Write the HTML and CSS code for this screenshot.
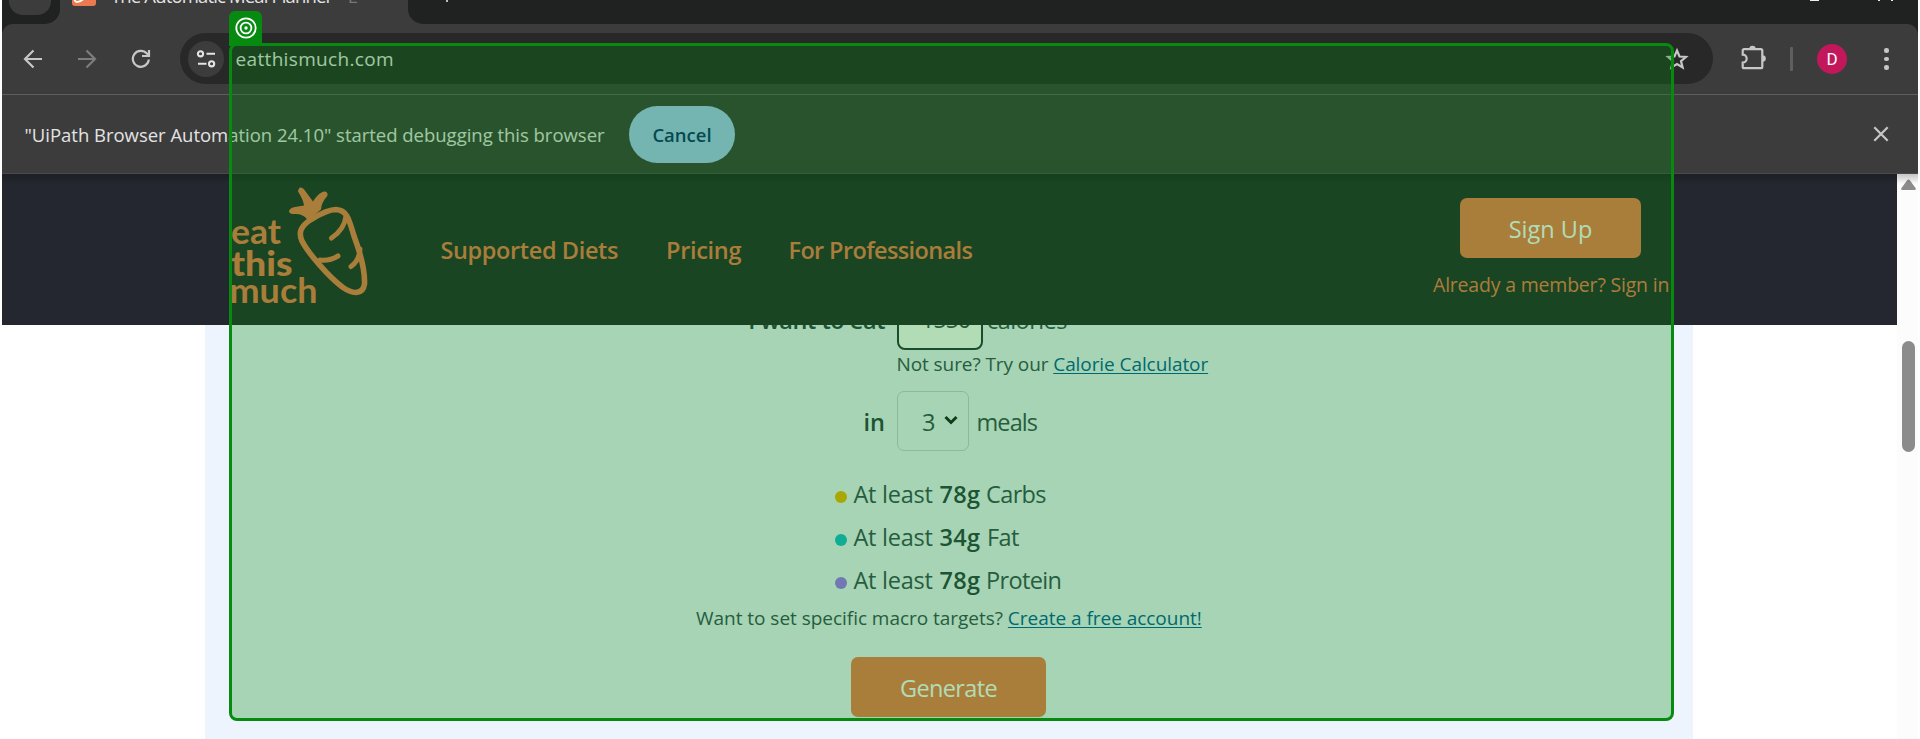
FILE: index.html
```html
<!DOCTYPE html>
<html lang="en">
<head>
<meta charset="utf-8">
<title>The Automatic Meal Planner</title>
<link rel="stylesheet" href="styles.css">
</head>
<body>
<div class="window">
  <div class="tabstrip">
    <div class="strip-left"><span class="tab-search"></span></div>
    <div class="tab">
      <svg class="favicon" width="24" height="24" viewBox="0 0 24 24"><rect width="24" height="24" rx="3" fill="#ec7a50"/><path d="M3 14c-1 4 0 6 2 6 3 0 6-2 9-6" fill="none" stroke="#fff" stroke-width="2"/></svg>
      <span class="tab-title">The Automatic Meal Planner</span><span class="tab-rest">- E</span>
    </div>
    <div class="strip-right"><span class="plus"></span><span class="win-min"></span><span class="win-x"></span><span class="win-x"></span></div>
  </div>

  <div class="toolbar">
    <svg class="ic back" width="20" height="20" viewBox="0 0 20 20"><path d="M19 10H2.500M10.500 1.500 2 10l8.500 8.500"/></svg>
    <svg class="ic forward" width="20" height="20" viewBox="0 0 20 20"><path d="M1 10h16.500M9.500 1.500 18 10l-8.500 8.500"/></svg>
    <svg class="ic reload" width="20" height="20" viewBox="0 0 20 20"><path d="M17.800 10.500A8 8 0 1 1 15.900 4.600L18 6.600M18 1v6h-7"/></svg>
    <div class="omnibox">
      <span class="site-chip"><svg width="20" height="20" viewBox="0 0 20 20"><g fill="none" stroke="#e3e3e3" stroke-width="2.100"><circle cx="4.500" cy="4.800" r="2.600"/><path d="M10.500 4.800H19M2 14.800h8.500"/><circle cx="15.600" cy="14.800" r="2.600"/></g></svg></span>
      <span class="url">eatthismuch.com</span>
      <svg class="star" width="24" height="24" viewBox="0 0 24 24"><path d="M12 3.500l2.500 6 6.400.5-4.900 4.100 1.600 6.300L12 17l-5.600 3.400L8 14.100 3.100 10l6.400-.5z"/></svg>
    </div>
    <svg class="ext" width="26" height="26" viewBox="0 0 26 26"><path d="M3.200 5.200h16.600q1.500 0 1.500 1.500v16q0 1.500-1.500 1.500H3.200q-1.500 0-1.500-1.500V18.600a3.800 3.800 0 0 0 0-8V6.700q0-1.500 1.500-1.500z" fill="none" stroke="#c7c7c7" stroke-width="2.200"/><path d="M8.300 5a3.200 3.200 0 0 1 6.400 0zM21.500 11.300a3.300 3.300 0 0 1 0 6.600z" fill="#c7c7c7"/></svg>
    <span class="divider"></span>
    <span class="avatar">D</span>
    <span class="dots"><i></i><i></i><i></i></span>
  </div>

  <div class="infobar">
    <span class="info-text">"UiPath Browser Automation 24.10" started debugging this browser</span>
    <span class="cancel">Cancel</span>
    <svg class="close" width="16" height="16" viewBox="0 0 16 16"><path d="M1.300 1.300l13.400 13.400M14.700 1.300 1.300 14.700"/></svg>
  </div>

  <div class="viewport">
    <div class="page">
      <header class="site-header">
        <svg class="logo" width="140" height="122" viewBox="0 0 140 122">
          <g fill="#f3784f">
            <g font-family="Lato, sans-serif" font-size="34">
              <text x="0" y="61.200" font-weight="700" textLength="50" lengthAdjust="spacingAndGlyphs">eat</text>
              <text x="0" y="92.500" font-weight="900" textLength="61.500" lengthAdjust="spacingAndGlyphs">this</text>
              <text x="-1.500" y="119.800" font-weight="700" textLength="88" lengthAdjust="spacingAndGlyphs">much</text>
            </g>
            <path d="M69 4.500c3-.5 5 3 7.500 6.500l5.500 7.500c3-5 7-9 11-10 3-.3 4.500 2.500 3 5-3 3-5.500 7-6 13l-13.500 11c-1-3.500-6-6.500-11-6.500-3 0-6 .5-7.500-2 0-3 3-4.500 6-5 3-.6 6-.8 9-1.500-.5-5-3-9-6-14 0-2 1-3 2-4z"/>
            <g fill="none" stroke="#f3784f" stroke-linecap="round" stroke-linejoin="round">
              <path stroke-width="5.600" d="M80 36.500C70 43 67 49 71 58 77 70 98 94 112 104.500 123 112 132 111 133.500 101 134 88 129 69 123 53 118 36 116 27 105 26.500 97 26.500 89 31 80 36.500z"/>
              <path stroke-width="5" d="M115 33c-1 9-7 17-14.500 22M89 77c7 1 13-1 18-4M129 66c-.5 8-4 14-9 17.500"/>
            </g>
          </g>
        </svg>
        <nav class="nav"><a class="n1">Supported Diets</a><a class="n2">Pricing</a><a class="n3">For Professionals</a></nav>
        <div class="account"><a class="btn signup">Sign Up</a><a class="signin">Already a member? Sign in</a></div>
      </header>
      <main class="panel">
        <div class="row eat-row"><b class="label eat-label">I want to eat</b><span class="calories-input">1550</span><span class="unit cal">calories</span></div>
        <div class="hint">Not sure? Try our <a class="link">Calorie Calculator</a></div>
        <div class="row meal-row"><b class="label">in</b><span class="meal-select">3<svg width="14" height="10" viewBox="0 0 14 10"><path d="M1.500 2 7 7.500 12.500 2"/></svg></span><span class="unit meals">meals</span></div>
        <ul class="macros">
          <li><i class="dot carbs"></i><span>At least</span><b>78g</b><span>Carbs</span></li>
          <li><i class="dot fat"></i><span>At least</span><b class="g34">34g</b><span>Fat</span></li>
          <li><i class="dot protein"></i><span>At least</span><b>78g</b><span>Protein</span></li>
        </ul>
        <div class="targets">Want to set specific macro targets? <a class="link">Create a free account!</a></div>
        <a class="btn generate">Generate</a>
      </main>
    </div>
    <div class="scrollbar"><svg width="15" height="12" viewBox="0 0 15 12"><path d="M6 1.500q1.500-2 3 0l5.500 7.500q1 2-1 2h-12q-2 0-1-2z" fill="#8b8b8b"/></svg><span class="thumb"></span></div>
    <div class="top-shadow"></div>
  </div>
</div>

<div class="highlight"><span class="badge"><svg width="22" height="22" viewBox="0 0 22 22"><g fill="none" stroke="#fff" stroke-width="1.800"><circle cx="11" cy="11" r="9.700"/><circle cx="11" cy="11" r="5.400"/></g><circle cx="11" cy="11" r="1.700" fill="#fff"/></svg></span></div>
</body>
</html>
```

FILE: styles.css
```css
*{box-sizing:border-box}
body{margin:0;width:1920px;height:739px;overflow:hidden;position:relative;background:#fff;font-family:"Open Sans","Noto Sans",sans-serif}
a{text-decoration:none;color:inherit}
svg{display:block;flex:none}
.window{width:1916px;height:739px;margin-left:2px;background:#202222;display:flex;flex-direction:column;overflow:hidden}

.tabstrip{height:24px;display:flex;background:#3c3c3c;flex:none}
.strip-left{width:58px;background:#202222;border-bottom-right-radius:15px;padding-left:7px}
.tab-search{display:block;width:42px;height:15px;background:#3c3c3c;border-radius:0 0 14px 14px}
.tab{width:348px;display:flex;height:24px;padding-left:12px;color:#e3e3e3;font-size:18.5px;line-height:26px}
.favicon{margin-top:-18px}
.tab-title{margin:-17px 0 0 15px;letter-spacing:-.85px;white-space:nowrap;width:223px}
.tab-rest{margin-top:-17px;margin-left:3px;color:#777;white-space:nowrap}
.strip-right{flex:1;background:#202222;border-bottom-left-radius:15px;display:flex;padding-left:38px}
.plus{width:2px;height:1.500px;background:#bbb}
.win-min{width:9px;height:1px;background:#eee;margin-left:1362px}
.win-x{width:2px;height:1px;background:#eee;margin-left:59px}
.win-x + .win-x{margin-left:11px}

.toolbar{height:71px;flex:none;background:#3c3c3c;border-radius:11px 11px 0 0;border-bottom:1px solid #5f5f5f;display:flex;align-items:center;padding-left:21px}
.ic{fill:none;stroke:#c7c7c7;stroke-width:2.200}
.forward{margin-left:34px;stroke:#7d7d7d}
.reload{margin-left:34px}
.omnibox{width:1533px;height:51px;margin-left:29px;margin-top:-1px;border-radius:26px;background:#282828;display:flex;align-items:center;padding-left:8px}
.site-chip{width:36px;height:36px;border-radius:50%;background:#3c3c3c;display:flex;align-items:center;justify-content:center}
.url{margin-left:11.500px;font-size:19px;letter-spacing:.34px;color:#e3e3e3;line-height:26px}
.star{margin-left:auto;margin-right:24px;fill:none;stroke:#c7c7c7;stroke-width:2.200}
.ext{margin-left:28px;margin-top:-4px}
.divider{width:3px;height:24px;background:#5f5f5f;border-radius:1px;margin-left:23px}
.avatar{width:30px;height:30px;border-radius:50%;background:#c2185b;color:#fff;font:17px/30px Roboto,sans-serif;text-align:center;margin-left:24px}
.dots{display:flex;flex-direction:column;gap:4px;margin-left:37px}
.dots i{width:4.500px;height:4.500px;border-radius:50%;background:#c7c7c7}

.infobar{height:79px;flex:none;background:#3c3c3c;border-bottom:1px solid #4b4b4b;display:flex;align-items:center;padding:0 29px 0 22.500px;color:#e3e3e3;font-size:18.5px}
.info-text{width:580px;letter-spacing:-.02px;white-space:nowrap}
.cancel{width:106px;height:57px;margin-left:24.500px;border-radius:29px;background:#a8c7fa;color:#062e6f;font-weight:600;text-align:center;line-height:57px}
.close{margin-left:auto;fill:none;stroke:#c7c7c7;stroke-width:2.200}

.viewport{flex:1;display:flex;position:relative;z-index:0;min-height:0;background:#fff}
.top-shadow{position:absolute;left:0;right:0;top:0;height:10px;z-index:2;background:linear-gradient(rgba(0,0,0,.22),rgba(0,0,0,0))}
.page{width:1895px;display:flex;flex-direction:column}
.site-header{height:151px;flex:none;background:#24272f;position:relative;z-index:1;display:flex;padding-left:229px;color:#f3784f}
.logo{margin-top:8.500px}
.nav{display:flex;margin-left:69.500px;font-size:23.5px;font-weight:600;line-height:32px;padding-top:60px;white-space:nowrap}
.n1{width:225.500px;letter-spacing:-.38px}
.n2{width:122.500px;letter-spacing:-.3px}
.n3{letter-spacing:-.63px}
.account{margin-left:auto;width:236px;margin-right:228px;display:flex;flex-direction:column;align-items:flex-start;padding-top:24px}
.btn{display:block;background:#f3784f;color:#fff;border-radius:7px;text-align:center;height:60px;font-size:23.5px;line-height:62px}
.signup{width:181px;margin-left:27px}
.signin{font-size:19.5px;letter-spacing:-.2px;line-height:28px;margin-top:13px;white-space:nowrap}

.panel{width:1488px;margin:-34px 0 0 203px;height:450px;background:#eef4fe;color:#374957;font-size:23.5px;display:flex;flex-direction:column}
.row{display:flex;align-items:center}
.label{width:680px;text-align:right;margin-right:12px;font-weight:600;color:#2b3c47}
.eat-row{height:59px}
.eat-label{letter-spacing:-.45px}
.calories-input{width:86px;height:59px;background:#fff;border:2px solid #24333c;border-radius:8px;padding-left:22px;line-height:53px;letter-spacing:-1.200px}
.unit{margin-left:6px}
.cal{letter-spacing:-.55px;margin-left:4px}
.eat-label,.cal{line-height:57px}
.meals{margin-left:7.500px;letter-spacing:-.9px}
.hint{padding-left:691.500px;font-size:19px;letter-spacing:-.08px;line-height:28px;height:41px}
.link{color:#005a9c;text-decoration:underline;text-decoration-thickness:1px;text-underline-offset:2px}
.meal-row{height:60px;line-height:34px}
.meal-row .label,.meals{padding-top:2px}
.meal-select{width:72px;height:60px;border:1px solid #c4cfd8;border-radius:7px;display:flex;align-items:center;padding:2px 0 0 24px}
.meal-select svg{margin-left:9px;margin-top:-5px;fill:none;stroke:#141c20;stroke-width:3}
.macros{list-style:none;margin:22px 0 0 630px;padding:0}
.macros li{height:43px;line-height:43px;display:flex;align-items:center;letter-spacing:-.25px;white-space:nowrap}
.macros b{font-weight:600;color:#2b3c47;margin:0 6px 0 7px;letter-spacing:.2px}
.macros b.g34{margin-right:7px}
.macros b + span{letter-spacing:-.66px}
.dot{width:12px;height:12px;border-radius:50%;margin:4px 6.500px 0 0}
.carbs{background:#f3b300}
.fat{background:#16bcd2}
.protein{background:#a470fd}
.targets{padding-left:491px;font-size:19px;letter-spacing:-.03px;line-height:28px;margin-top:2px}
.generate{width:195px;margin:25px 0 0 646px;letter-spacing:-.65px}

.scrollbar{width:21px;background:#fcfcfc;padding:5px 0 0 4px}
.thumb{display:block;width:13px;height:111px;border-radius:7px;background:#8b8b8b;margin:150px 0 0 1px}

.highlight{position:absolute;left:229px;top:43px;width:1445px;height:677.500px;border:3px solid #078a10;border-radius:8px;background:rgba(0,140,10,.3);background-clip:padding-box}
.badge{position:absolute;left:-3px;top:-35px;width:33px;height:35px;border-radius:6px 6px 0 0;background:#078a10;padding:5.500px 0 0 5.500px}
```
